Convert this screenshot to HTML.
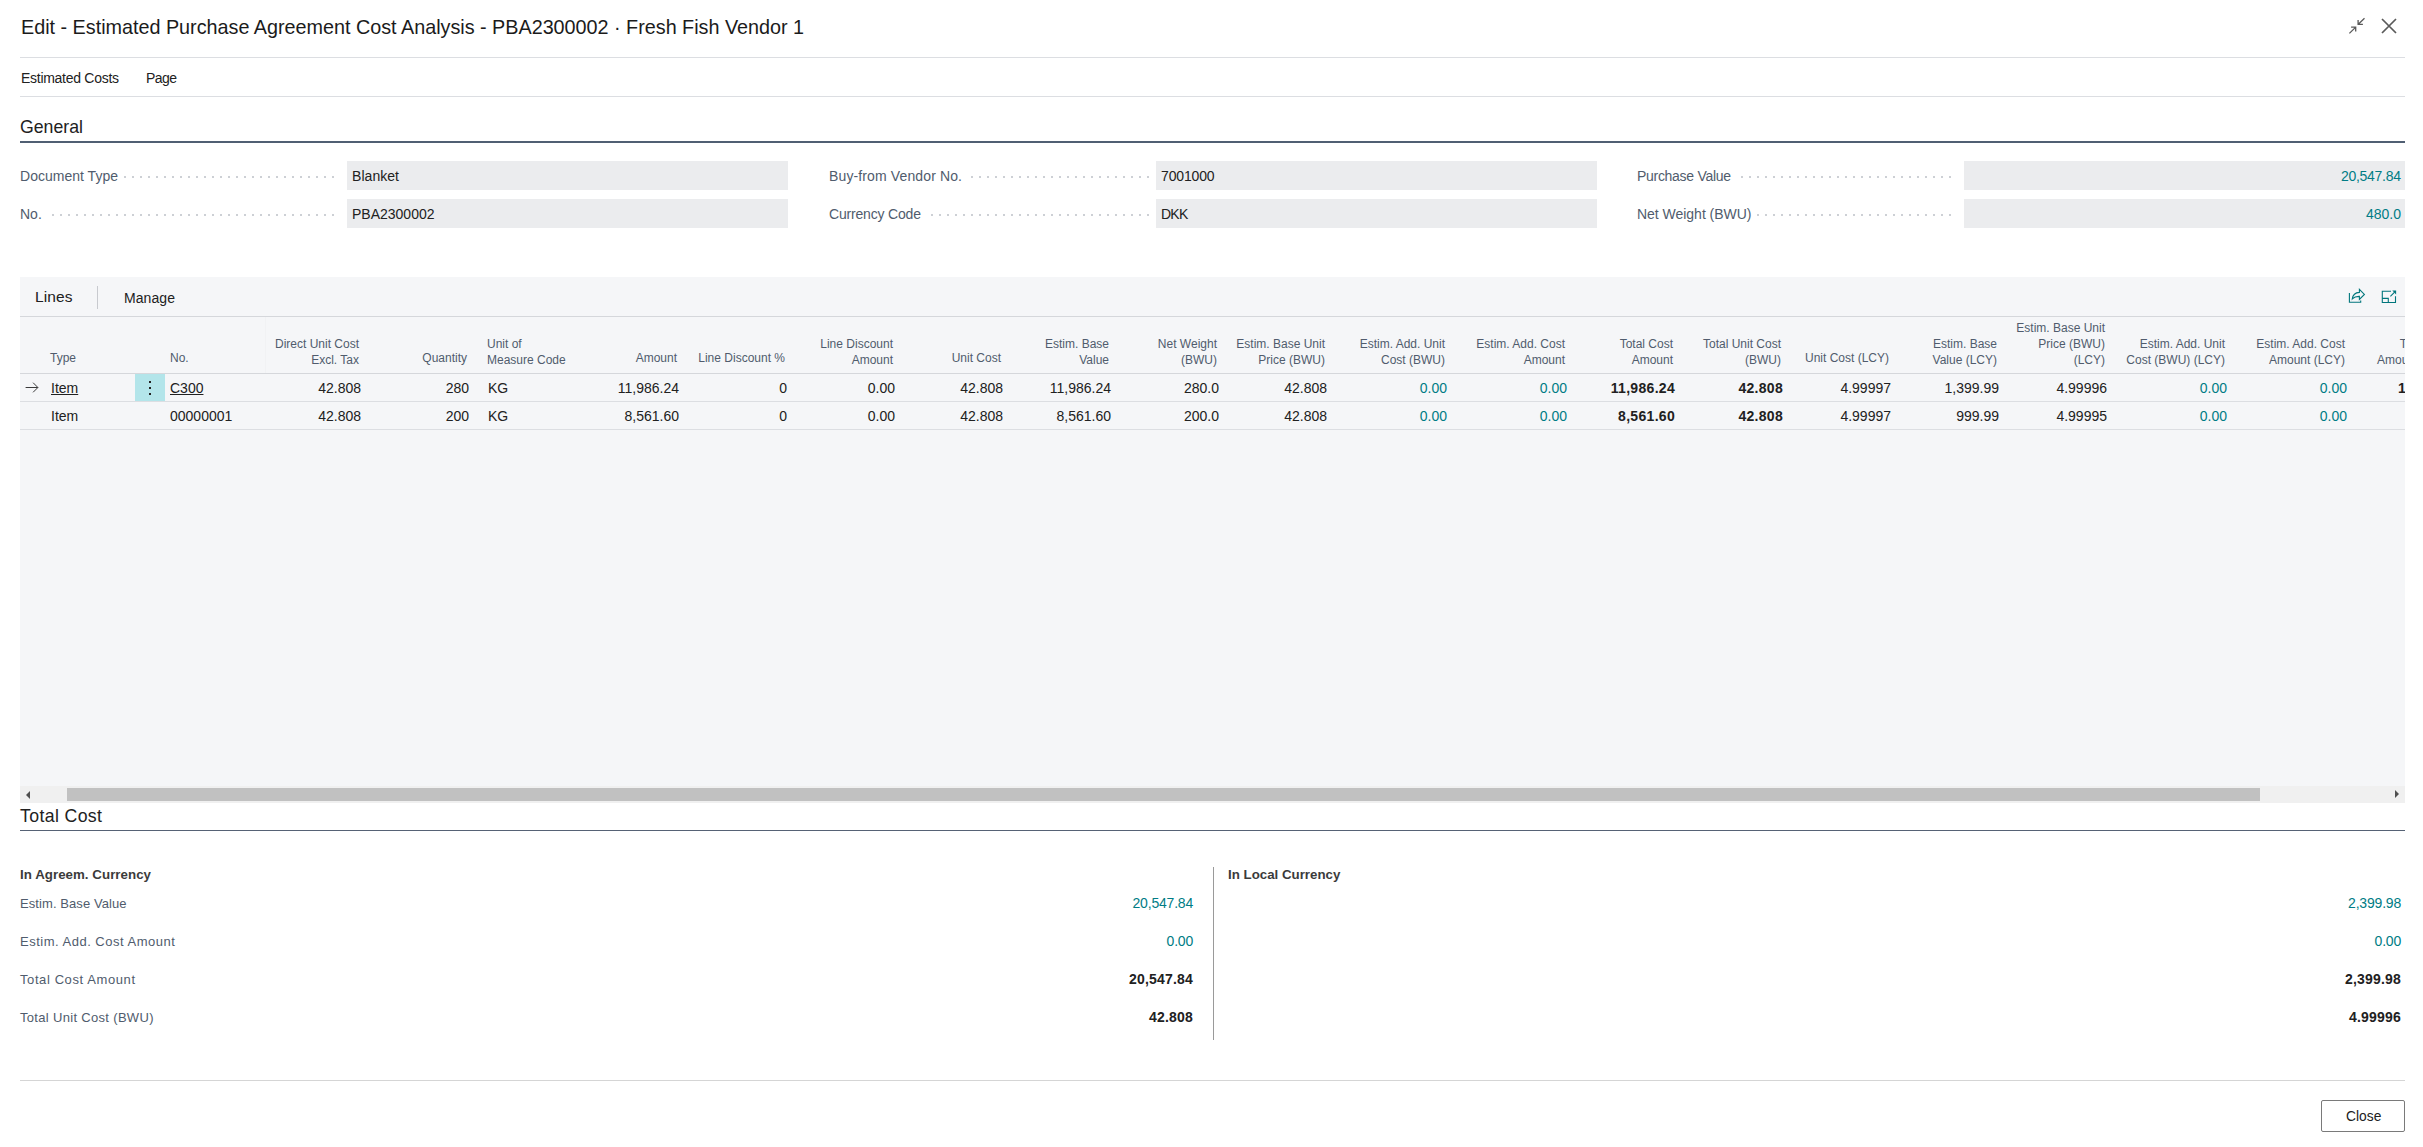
<!DOCTYPE html><html><head><meta charset="utf-8"><style>
html,body{margin:0;padding:0;background:#fff;width:2423px;height:1147px;overflow:hidden;position:relative}
.t{position:absolute;font-family:"Liberation Sans",sans-serif;white-space:nowrap}
.r{position:absolute}
.clip{position:absolute;overflow:hidden}
.dots{position:absolute;height:2px;background-image:linear-gradient(90deg,transparent 3px,#cdd0d5 3px,#cdd0d5 5px,transparent 5px);background-size:8px 2px;background-repeat:repeat-x;background-position:right}
</style></head><body><div class="t" style="left:21px;top:18px;font-size:19.8px;line-height:19.8px;font-weight:400;color:#1b1b1b;letter-spacing:-0.011px;">Edit - Estimated Purchase Agreement Cost Analysis - PBA2300002 · Fresh Fish Vendor 1</div>
<div class="r" style="left:20px;top:57px;width:2385px;height:1px;background:#dcdee2"></div>
<div class="t" style="left:21px;top:71px;font-size:14px;line-height:14px;font-weight:400;color:#212121;letter-spacing:-0.281px;">Estimated Costs</div>
<div class="t" style="left:146px;top:71px;font-size:14px;line-height:14px;font-weight:400;color:#212121;letter-spacing:-0.568px;">Page</div>
<div class="r" style="left:20px;top:96px;width:2385px;height:1px;background:#dcdee2"></div>
<svg class="r" style="left:2340px;top:10px" width="60" height="30" viewBox="0 0 60 30"><g stroke="#5a5a5a" stroke-width="1.3" fill="none" stroke-linecap="butt"><path d="M9.4 23.4 L15.5 17.4 M11.1 17.2 H15.7 V21.6"/><path d="M24.5 8.3 L18.3 14.3 M18.1 10 V14.4 H22.9"/></g><g stroke="#5a5a5a" stroke-width="1.7" fill="none"><path d="M42 9 L56 23 M56 9 L42 23"/></g></svg>
<div class="t" style="left:20px;top:119px;font-size:17.7px;line-height:17.7px;font-weight:400;color:#212121;letter-spacing:0.010px;">General</div>
<div class="r" style="left:20px;top:141px;width:2385px;height:2px;background:#505f73"></div>
<div class="r" style="left:347px;top:161px;width:441px;height:29px;background:#ebecee"></div>
<div class="dots" style="left:20px;top:176px;width:317px"></div>
<div class="t" style="left:20px;top:169px;font-size:14px;line-height:14px;font-weight:400;color:#505c6d;letter-spacing:0.017px;background:#fff;padding-right:6px;z-index:1">Document Type</div>
<div class="t" style="left:352px;top:169px;font-size:14px;line-height:14px;font-weight:400;color:#212121;letter-spacing:0.049px;">Blanket</div>
<div class="r" style="left:347px;top:199px;width:441px;height:29px;background:#ebecee"></div>
<div class="dots" style="left:20px;top:214px;width:317px"></div>
<div class="t" style="left:20px;top:207px;font-size:14px;line-height:14px;font-weight:400;color:#505c6d;background:#fff;padding-right:6px;z-index:1">No.</div>
<div class="t" style="left:352px;top:207px;font-size:14px;line-height:14px;font-weight:400;color:#212121;">PBA2300002</div>
<div class="r" style="left:1156px;top:161px;width:441px;height:29px;background:#ebecee"></div>
<div class="dots" style="left:829px;top:176px;width:323px"></div>
<div class="t" style="left:829px;top:169px;font-size:14px;line-height:14px;font-weight:400;color:#505c6d;letter-spacing:0.126px;background:#fff;padding-right:6px;z-index:1">Buy-from Vendor No.</div>
<div class="t" style="left:1161px;top:169px;font-size:14px;line-height:14px;font-weight:400;color:#212121;letter-spacing:-0.153px;">7001000</div>
<div class="r" style="left:1156px;top:199px;width:441px;height:29px;background:#ebecee"></div>
<div class="dots" style="left:829px;top:214px;width:323px"></div>
<div class="t" style="left:829px;top:207px;font-size:14px;line-height:14px;font-weight:400;color:#505c6d;letter-spacing:-0.180px;background:#fff;padding-right:6px;z-index:1">Currency Code</div>
<div class="t" style="left:1161px;top:207px;font-size:14px;line-height:14px;font-weight:400;color:#212121;letter-spacing:-0.748px;">DKK</div>
<div class="r" style="left:1964px;top:161px;width:441px;height:29px;background:#ebecee"></div>
<div class="dots" style="left:1637px;top:176px;width:317px"></div>
<div class="t" style="left:1637px;top:169px;font-size:14px;line-height:14px;font-weight:400;color:#505c6d;letter-spacing:-0.293px;background:#fff;padding-right:6px;z-index:1">Purchase Value</div>
<div class="t" style="left:1700.71px;width:700px;text-align:right;top:169px;font-size:14px;line-height:14px;font-weight:400;color:#007c85;letter-spacing:-0.287px;">20,547.84</div>
<div class="r" style="left:1964px;top:199px;width:441px;height:29px;background:#ebecee"></div>
<div class="dots" style="left:1637px;top:214px;width:317px"></div>
<div class="t" style="left:1637px;top:207px;font-size:14px;line-height:14px;font-weight:400;color:#505c6d;letter-spacing:-0.025px;background:#fff;padding-right:6px;z-index:1">Net Weight (BWU)</div>
<div class="t" style="left:1701.00px;width:700px;text-align:right;top:207px;font-size:14px;line-height:14px;font-weight:400;color:#007c85;">480.0</div>
<div class="r" style="left:20px;top:277px;width:2385px;height:526px;background:#f5f6f8"></div>
<div class="t" style="left:35px;top:289px;font-size:15.5px;line-height:15.5px;font-weight:400;color:#212121;letter-spacing:0.109px;">Lines</div>
<div class="r" style="left:97px;top:286px;width:1px;height:23px;background:#c8cacf"></div>
<div class="t" style="left:124px;top:291px;font-size:14px;line-height:14px;font-weight:400;color:#212121;letter-spacing:0.081px;">Manage</div>
<div class="r" style="left:20px;top:316px;width:2385px;height:1px;background:#d5d7db"></div>
<div class="r" style="left:20px;top:373px;width:2385px;height:1px;background:#d5d7db"></div>
<div class="r" style="left:265px;top:317px;width:1px;height:56px;background:#f1f2f4"></div>
<div class="r" style="left:20px;top:401px;width:2385px;height:1px;background:#dcdee2"></div>
<div class="r" style="left:20px;top:429px;width:2385px;height:1px;background:#dcdee2"></div>
<div class="clip" style="left:0;top:300px;width:2405px;height:140px"><div class="r" style="left:0;top:-300px">
<div class="t" style="left:50px;top:352px;font-size:12px;line-height:12px;font-weight:400;color:#505c6d;">Type</div>
<div class="t" style="left:170px;top:352px;font-size:12px;line-height:12px;font-weight:400;color:#505c6d;">No.</div>
<div class="t" style="left:-341.00px;width:700px;text-align:right;top:338px;font-size:12px;line-height:12px;font-weight:400;color:#505c6d;">Direct Unit Cost</div>
<div class="t" style="left:-341.00px;width:700px;text-align:right;top:354px;font-size:12px;line-height:12px;font-weight:400;color:#505c6d;">Excl. Tax</div>
<div class="t" style="left:-233.00px;width:700px;text-align:right;top:352px;font-size:12px;line-height:12px;font-weight:400;color:#505c6d;">Quantity</div>
<div class="t" style="left:487px;top:338px;font-size:12px;line-height:12px;font-weight:400;color:#505c6d;">Unit of</div>
<div class="t" style="left:487px;top:354px;font-size:12px;line-height:12px;font-weight:400;color:#505c6d;">Measure Code</div>
<div class="t" style="left:-23.00px;width:700px;text-align:right;top:352px;font-size:12px;line-height:12px;font-weight:400;color:#505c6d;">Amount</div>
<div class="t" style="left:85.00px;width:700px;text-align:right;top:352px;font-size:12px;line-height:12px;font-weight:400;color:#505c6d;">Line Discount %</div>
<div class="t" style="left:193.00px;width:700px;text-align:right;top:338px;font-size:12px;line-height:12px;font-weight:400;color:#505c6d;">Line Discount</div>
<div class="t" style="left:193.00px;width:700px;text-align:right;top:354px;font-size:12px;line-height:12px;font-weight:400;color:#505c6d;">Amount</div>
<div class="t" style="left:301.00px;width:700px;text-align:right;top:352px;font-size:12px;line-height:12px;font-weight:400;color:#505c6d;">Unit Cost</div>
<div class="t" style="left:409.00px;width:700px;text-align:right;top:338px;font-size:12px;line-height:12px;font-weight:400;color:#505c6d;">Estim. Base</div>
<div class="t" style="left:409.00px;width:700px;text-align:right;top:354px;font-size:12px;line-height:12px;font-weight:400;color:#505c6d;">Value</div>
<div class="t" style="left:517.00px;width:700px;text-align:right;top:338px;font-size:12px;line-height:12px;font-weight:400;color:#505c6d;">Net Weight</div>
<div class="t" style="left:517.00px;width:700px;text-align:right;top:354px;font-size:12px;line-height:12px;font-weight:400;color:#505c6d;">(BWU)</div>
<div class="t" style="left:625.00px;width:700px;text-align:right;top:338px;font-size:12px;line-height:12px;font-weight:400;color:#505c6d;">Estim. Base Unit</div>
<div class="t" style="left:625.00px;width:700px;text-align:right;top:354px;font-size:12px;line-height:12px;font-weight:400;color:#505c6d;">Price (BWU)</div>
<div class="t" style="left:745.00px;width:700px;text-align:right;top:338px;font-size:12px;line-height:12px;font-weight:400;color:#505c6d;">Estim. Add. Unit</div>
<div class="t" style="left:745.00px;width:700px;text-align:right;top:354px;font-size:12px;line-height:12px;font-weight:400;color:#505c6d;">Cost (BWU)</div>
<div class="t" style="left:865.00px;width:700px;text-align:right;top:338px;font-size:12px;line-height:12px;font-weight:400;color:#505c6d;">Estim. Add. Cost</div>
<div class="t" style="left:865.00px;width:700px;text-align:right;top:354px;font-size:12px;line-height:12px;font-weight:400;color:#505c6d;">Amount</div>
<div class="t" style="left:973.00px;width:700px;text-align:right;top:338px;font-size:12px;line-height:12px;font-weight:400;color:#505c6d;">Total Cost</div>
<div class="t" style="left:973.00px;width:700px;text-align:right;top:354px;font-size:12px;line-height:12px;font-weight:400;color:#505c6d;">Amount</div>
<div class="t" style="left:1081.00px;width:700px;text-align:right;top:338px;font-size:12px;line-height:12px;font-weight:400;color:#505c6d;">Total Unit Cost</div>
<div class="t" style="left:1081.00px;width:700px;text-align:right;top:354px;font-size:12px;line-height:12px;font-weight:400;color:#505c6d;">(BWU)</div>
<div class="t" style="left:1189.00px;width:700px;text-align:right;top:352px;font-size:12px;line-height:12px;font-weight:400;color:#505c6d;">Unit Cost (LCY)</div>
<div class="t" style="left:1297.00px;width:700px;text-align:right;top:338px;font-size:12px;line-height:12px;font-weight:400;color:#505c6d;">Estim. Base</div>
<div class="t" style="left:1297.00px;width:700px;text-align:right;top:354px;font-size:12px;line-height:12px;font-weight:400;color:#505c6d;">Value (LCY)</div>
<div class="t" style="left:1405.00px;width:700px;text-align:right;top:322px;font-size:12px;line-height:12px;font-weight:400;color:#505c6d;">Estim. Base Unit</div>
<div class="t" style="left:1405.00px;width:700px;text-align:right;top:338px;font-size:12px;line-height:12px;font-weight:400;color:#505c6d;">Price (BWU)</div>
<div class="t" style="left:1405.00px;width:700px;text-align:right;top:354px;font-size:12px;line-height:12px;font-weight:400;color:#505c6d;">(LCY)</div>
<div class="t" style="left:1525.00px;width:700px;text-align:right;top:338px;font-size:12px;line-height:12px;font-weight:400;color:#505c6d;">Estim. Add. Unit</div>
<div class="t" style="left:1525.00px;width:700px;text-align:right;top:354px;font-size:12px;line-height:12px;font-weight:400;color:#505c6d;">Cost (BWU) (LCY)</div>
<div class="t" style="left:1645.00px;width:700px;text-align:right;top:338px;font-size:12px;line-height:12px;font-weight:400;color:#505c6d;">Estim. Add. Cost</div>
<div class="t" style="left:1645.00px;width:700px;text-align:right;top:354px;font-size:12px;line-height:12px;font-weight:400;color:#505c6d;">Amount (LCY)</div>
<div class="t" style="left:1753.00px;width:700px;text-align:right;top:338px;font-size:12px;line-height:12px;font-weight:400;color:#505c6d;">Total Cost</div>
<div class="t" style="left:1753.00px;width:700px;text-align:right;top:354px;font-size:12px;line-height:12px;font-weight:400;color:#505c6d;">Amount (LCY)</div>
<div class="t" style="left:51px;top:381px;font-size:14px;line-height:14px;font-weight:400;color:#212121;text-decoration:underline;text-underline-offset:0.5px;text-decoration-thickness:1px">Item</div>
<div class="t" style="left:170px;top:381px;font-size:14px;line-height:14px;font-weight:400;color:#212121;text-decoration:underline;text-underline-offset:1px;text-decoration-thickness:1px">C300</div>
<div class="t" style="left:488px;top:381px;font-size:14px;line-height:14px;font-weight:400;color:#212121;">KG</div>
<div class="t" style="left:-339.00px;width:700px;text-align:right;top:381px;font-size:14px;line-height:14px;font-weight:400;color:#212121;">42.808</div>
<div class="t" style="left:-231.00px;width:700px;text-align:right;top:381px;font-size:14px;line-height:14px;font-weight:400;color:#212121;">280</div>
<div class="t" style="left:-21.00px;width:700px;text-align:right;top:381px;font-size:14px;line-height:14px;font-weight:400;color:#212121;">11,986.24</div>
<div class="t" style="left:87.00px;width:700px;text-align:right;top:381px;font-size:14px;line-height:14px;font-weight:400;color:#212121;">0</div>
<div class="t" style="left:195.00px;width:700px;text-align:right;top:381px;font-size:14px;line-height:14px;font-weight:400;color:#212121;">0.00</div>
<div class="t" style="left:303.00px;width:700px;text-align:right;top:381px;font-size:14px;line-height:14px;font-weight:400;color:#212121;">42.808</div>
<div class="t" style="left:411.00px;width:700px;text-align:right;top:381px;font-size:14px;line-height:14px;font-weight:400;color:#212121;">11,986.24</div>
<div class="t" style="left:519.00px;width:700px;text-align:right;top:381px;font-size:14px;line-height:14px;font-weight:400;color:#212121;">280.0</div>
<div class="t" style="left:627.00px;width:700px;text-align:right;top:381px;font-size:14px;line-height:14px;font-weight:400;color:#212121;">42.808</div>
<div class="t" style="left:747.00px;width:700px;text-align:right;top:381px;font-size:14px;line-height:14px;font-weight:400;color:#007c85;">0.00</div>
<div class="t" style="left:867.00px;width:700px;text-align:right;top:381px;font-size:14px;line-height:14px;font-weight:400;color:#007c85;">0.00</div>
<div class="t" style="left:975.00px;width:700px;text-align:right;top:381px;font-size:14px;line-height:14px;font-weight:700;color:#212121;letter-spacing:0.3px">11,986.24</div>
<div class="t" style="left:1083.00px;width:700px;text-align:right;top:381px;font-size:14px;line-height:14px;font-weight:700;color:#212121;letter-spacing:0.3px">42.808</div>
<div class="t" style="left:1191.00px;width:700px;text-align:right;top:381px;font-size:14px;line-height:14px;font-weight:400;color:#212121;">4.99997</div>
<div class="t" style="left:1299.00px;width:700px;text-align:right;top:381px;font-size:14px;line-height:14px;font-weight:400;color:#212121;">1,399.99</div>
<div class="t" style="left:1407.00px;width:700px;text-align:right;top:381px;font-size:14px;line-height:14px;font-weight:400;color:#212121;">4.99996</div>
<div class="t" style="left:1527.00px;width:700px;text-align:right;top:381px;font-size:14px;line-height:14px;font-weight:400;color:#007c85;">0.00</div>
<div class="t" style="left:1647.00px;width:700px;text-align:right;top:381px;font-size:14px;line-height:14px;font-weight:400;color:#007c85;">0.00</div>
<div class="t" style="left:1755.00px;width:700px;text-align:right;top:381px;font-size:14px;line-height:14px;font-weight:700;color:#212121;letter-spacing:0.3px">1,399.99</div>
<div class="t" style="left:51px;top:409px;font-size:14px;line-height:14px;font-weight:400;color:#212121;">Item</div>
<div class="t" style="left:170px;top:409px;font-size:14px;line-height:14px;font-weight:400;color:#212121;">00000001</div>
<div class="t" style="left:488px;top:409px;font-size:14px;line-height:14px;font-weight:400;color:#212121;">KG</div>
<div class="t" style="left:-339.00px;width:700px;text-align:right;top:409px;font-size:14px;line-height:14px;font-weight:400;color:#212121;">42.808</div>
<div class="t" style="left:-231.00px;width:700px;text-align:right;top:409px;font-size:14px;line-height:14px;font-weight:400;color:#212121;">200</div>
<div class="t" style="left:-21.00px;width:700px;text-align:right;top:409px;font-size:14px;line-height:14px;font-weight:400;color:#212121;">8,561.60</div>
<div class="t" style="left:87.00px;width:700px;text-align:right;top:409px;font-size:14px;line-height:14px;font-weight:400;color:#212121;">0</div>
<div class="t" style="left:195.00px;width:700px;text-align:right;top:409px;font-size:14px;line-height:14px;font-weight:400;color:#212121;">0.00</div>
<div class="t" style="left:303.00px;width:700px;text-align:right;top:409px;font-size:14px;line-height:14px;font-weight:400;color:#212121;">42.808</div>
<div class="t" style="left:411.00px;width:700px;text-align:right;top:409px;font-size:14px;line-height:14px;font-weight:400;color:#212121;">8,561.60</div>
<div class="t" style="left:519.00px;width:700px;text-align:right;top:409px;font-size:14px;line-height:14px;font-weight:400;color:#212121;">200.0</div>
<div class="t" style="left:627.00px;width:700px;text-align:right;top:409px;font-size:14px;line-height:14px;font-weight:400;color:#212121;">42.808</div>
<div class="t" style="left:747.00px;width:700px;text-align:right;top:409px;font-size:14px;line-height:14px;font-weight:400;color:#007c85;">0.00</div>
<div class="t" style="left:867.00px;width:700px;text-align:right;top:409px;font-size:14px;line-height:14px;font-weight:400;color:#007c85;">0.00</div>
<div class="t" style="left:975.00px;width:700px;text-align:right;top:409px;font-size:14px;line-height:14px;font-weight:700;color:#212121;letter-spacing:0.3px">8,561.60</div>
<div class="t" style="left:1083.00px;width:700px;text-align:right;top:409px;font-size:14px;line-height:14px;font-weight:700;color:#212121;letter-spacing:0.3px">42.808</div>
<div class="t" style="left:1191.00px;width:700px;text-align:right;top:409px;font-size:14px;line-height:14px;font-weight:400;color:#212121;">4.99997</div>
<div class="t" style="left:1299.00px;width:700px;text-align:right;top:409px;font-size:14px;line-height:14px;font-weight:400;color:#212121;">999.99</div>
<div class="t" style="left:1407.00px;width:700px;text-align:right;top:409px;font-size:14px;line-height:14px;font-weight:400;color:#212121;">4.99995</div>
<div class="t" style="left:1527.00px;width:700px;text-align:right;top:409px;font-size:14px;line-height:14px;font-weight:400;color:#007c85;">0.00</div>
<div class="t" style="left:1647.00px;width:700px;text-align:right;top:409px;font-size:14px;line-height:14px;font-weight:400;color:#007c85;">0.00</div>
<div class="t" style="left:1755.00px;width:700px;text-align:right;top:409px;font-size:14px;line-height:14px;font-weight:700;color:#212121;letter-spacing:0.3px">999.99</div>
</div></div>
<svg class="r" style="left:24px;top:381px" width="16" height="14" viewBox="0 0 16 14"><g stroke="#3a3a3a" stroke-width="1" fill="none"><path d="M1.6 6.5 H13.8 M9.1 1.7 L13.9 6.5 L9.1 11.3"/></g></svg>
<div class="r" style="left:135px;top:374px;width:30px;height:27px;background:#b3e5ea"></div>
<div class="r" style="left:149px;top:381px;width:2px;height:2px;background:#222"></div><div class="r" style="left:149px;top:387px;width:2px;height:2px;background:#222"></div><div class="r" style="left:149px;top:393px;width:2px;height:2px;background:#222"></div>
<svg class="r" style="left:2340px;top:284px" width="60" height="24" viewBox="0 0 60 24"><g stroke="#00767c" stroke-width="1.1" fill="none"><path d="M9.4 9 V18.3 H20.7 V16.6"/><path d="M12.3 14.9 C12.8 10.8 15.3 8.7 19.4 8.4 V5.3 L24.4 10.4 L19.4 15.4 V12.4 C16.2 12.3 14 13.2 12.3 14.9 Z" stroke-linejoin="miter"/><path d="M51 7.2 H42.3 V18.5 H55.5 V12.2 M42.3 14.4 H48.3 V18.5 M50.4 12.4 L54.6 8.2"/></g><path d="M52.3 6.6 H56.1 V10.4 Z" fill="#00767c"/></svg>
<div class="r" style="left:20px;top:786px;width:2385px;height:17px;background:#f0f0f0"></div>
<div class="r" style="left:67px;top:788px;width:2193px;height:13px;background:#c1c1c1"></div>
<svg class="r" style="left:24px;top:789px" width="10" height="12" viewBox="0 0 10 12"><path d="M6 2 L2 6 L6 10 Z" fill="#505050"/></svg>
<svg class="r" style="left:2391px;top:788px" width="10" height="12" viewBox="0 0 10 12"><path d="M4 2 L8 6 L4 10 Z" fill="#505050"/></svg>
<div class="t" style="left:20px;top:808px;font-size:17.7px;line-height:17.7px;font-weight:400;color:#212121;letter-spacing:0.372px;">Total Cost</div>
<div class="r" style="left:20px;top:830px;width:2385px;height:1px;background:#566275"></div>
<div class="t" style="left:20px;top:868px;font-size:13.3px;line-height:13.3px;font-weight:700;color:#3b3b3b;letter-spacing:0.038px;">In Agreem. Currency</div>
<div class="t" style="left:1228px;top:868px;font-size:13.3px;line-height:13.3px;font-weight:700;color:#3b3b3b;">In Local Currency</div>
<div class="r" style="left:1213px;top:867px;width:1px;height:173px;background:#9a9a9a"></div>
<div class="t" style="left:20px;top:897px;font-size:13px;line-height:13px;font-weight:400;color:#505c6d;letter-spacing:0.083px;">Estim. Base Value</div>
<div class="t" style="left:493.00px;width:700px;text-align:right;top:896px;font-size:14px;line-height:14px;font-weight:400;color:#007c85;letter-spacing:-0.2px">20,547.84</div>
<div class="t" style="left:1701.00px;width:700px;text-align:right;top:896px;font-size:14px;line-height:14px;font-weight:400;color:#007c85;letter-spacing:-0.2px">2,399.98</div>
<div class="t" style="left:20px;top:935px;font-size:13px;line-height:13px;font-weight:400;color:#505c6d;letter-spacing:0.500px;">Estim. Add. Cost Amount</div>
<div class="t" style="left:493.00px;width:700px;text-align:right;top:934px;font-size:14px;line-height:14px;font-weight:400;color:#007c85;letter-spacing:-0.2px">0.00</div>
<div class="t" style="left:1701.00px;width:700px;text-align:right;top:934px;font-size:14px;line-height:14px;font-weight:400;color:#007c85;letter-spacing:-0.2px">0.00</div>
<div class="t" style="left:20px;top:973px;font-size:13px;line-height:13px;font-weight:400;color:#505c6d;letter-spacing:0.594px;">Total Cost Amount</div>
<div class="t" style="left:493.00px;width:700px;text-align:right;top:972px;font-size:14px;line-height:14px;font-weight:700;color:#212121;letter-spacing:0.2px">20,547.84</div>
<div class="t" style="left:1701.00px;width:700px;text-align:right;top:972px;font-size:14px;line-height:14px;font-weight:700;color:#212121;letter-spacing:0.2px">2,399.98</div>
<div class="t" style="left:20px;top:1011px;font-size:13px;line-height:13px;font-weight:400;color:#505c6d;letter-spacing:0.318px;">Total Unit Cost (BWU)</div>
<div class="t" style="left:493.00px;width:700px;text-align:right;top:1010px;font-size:14px;line-height:14px;font-weight:700;color:#212121;letter-spacing:0.2px">42.808</div>
<div class="t" style="left:1701.00px;width:700px;text-align:right;top:1010px;font-size:14px;line-height:14px;font-weight:700;color:#212121;letter-spacing:0.2px">4.99996</div>
<div class="r" style="left:20px;top:1080px;width:2385px;height:1px;background:#d5d5d5"></div>
<div class="r" style="left:2321px;top:1100px;width:82px;height:30px;border:1px solid #7a7a7a;border-radius:2px;background:#fff"></div>
<div class="t" style="left:2346px;top:1110px;font-size:13.8px;line-height:13.8px;font-weight:400;color:#212121;letter-spacing:0.030px;">Close</div></body></html>
